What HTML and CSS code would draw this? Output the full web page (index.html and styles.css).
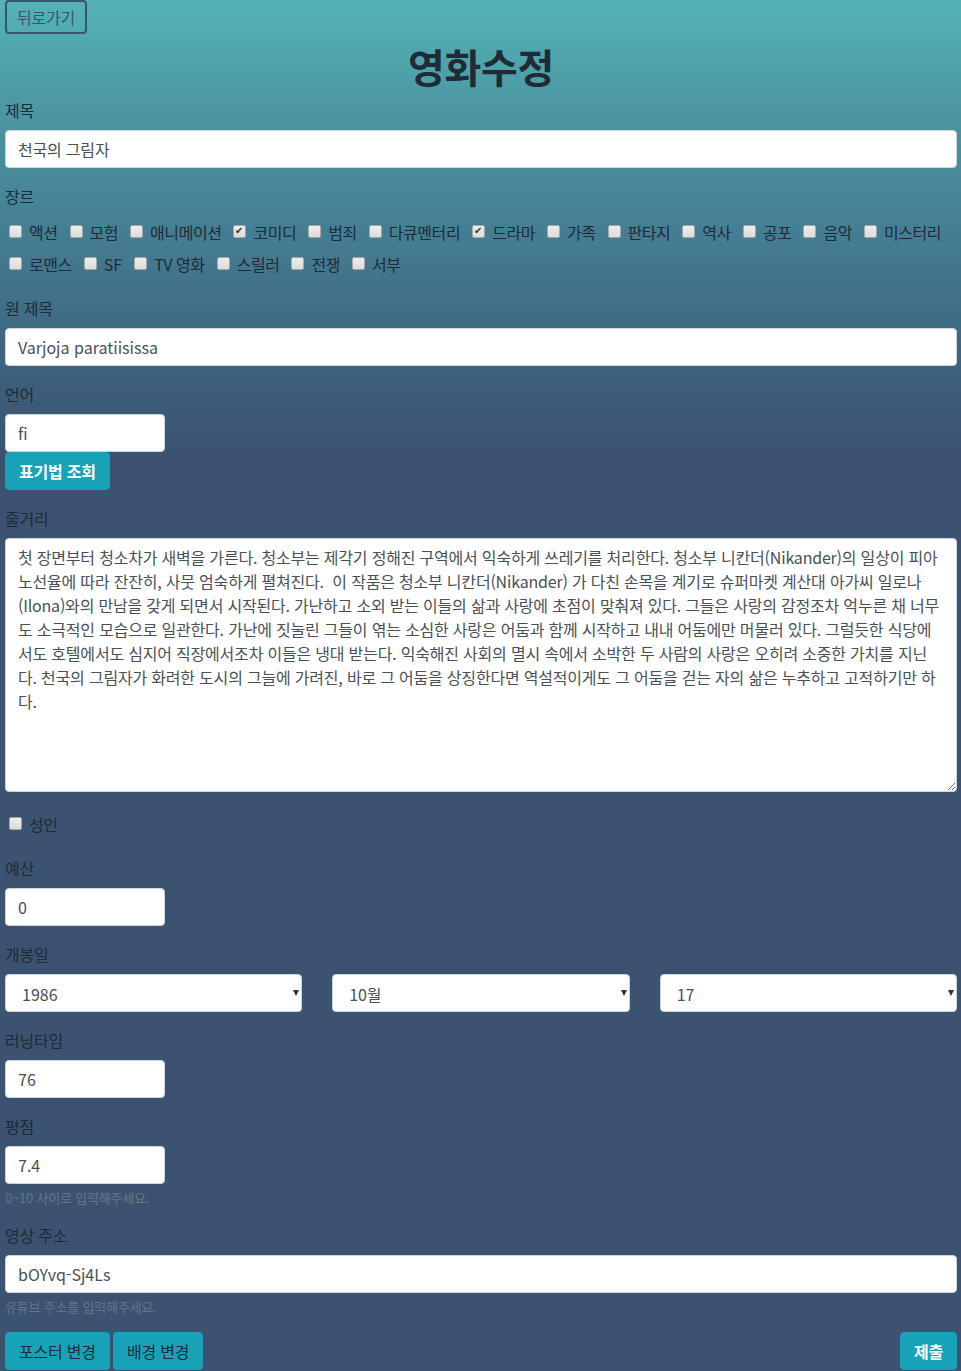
FILE: index.html
```html
<!DOCTYPE html>
<html lang="ko">
<head>
<meta charset="utf-8">
<title>영화수정</title>
<link rel="stylesheet" href="styles.css">
</head>
<body>
<div class="page">
  <button class="back-btn ko">뒤로가기</button>
  <h1 class="title">영화수정</h1>
  <form class="form">
    <div class="group">
      <label class="label ko">제목</label>
      <input class="field ko" type="text" value="천국의 그림자">
    </div>
    <div class="group">
      <label class="label ko">장르</label>
      <div class="genre-row">
        <span class="check"><input type="checkbox"><span class="ko">액션</span></span>
        <span class="check"><input type="checkbox"><span class="ko">모험</span></span>
        <span class="check"><input type="checkbox"><span class="ko">애니메이션</span></span>
        <span class="check"><input type="checkbox" checked><span class="ko">코미디</span></span>
        <span class="check"><input type="checkbox"><span class="ko">범죄</span></span>
        <span class="check"><input type="checkbox"><span class="ko">다큐멘터리</span></span>
        <span class="check"><input type="checkbox" checked><span class="ko">드라마</span></span>
        <span class="check"><input type="checkbox"><span class="ko">가족</span></span>
        <span class="check"><input type="checkbox"><span class="ko">판타지</span></span>
        <span class="check"><input type="checkbox"><span class="ko">역사</span></span>
        <span class="check"><input type="checkbox"><span class="ko">공포</span></span>
        <span class="check"><input type="checkbox"><span class="ko">음악</span></span>
        <span class="check"><input type="checkbox"><span class="ko">미스터리</span></span>
      </div>
      <div class="genre-row">
        <span class="check"><input type="checkbox"><span class="ko">로맨스</span></span>
        <span class="check"><input type="checkbox"><span>SF</span></span>
        <span class="check"><input type="checkbox"><span class="ko">TV 영화</span></span>
        <span class="check"><input type="checkbox"><span class="ko">스릴러</span></span>
        <span class="check"><input type="checkbox"><span class="ko">전쟁</span></span>
        <span class="check"><input type="checkbox"><span class="ko">서부</span></span>
      </div>
    </div>
    <div class="group">
      <label class="label ko">원 제목</label>
      <input class="field" type="text" value="Varjoja paratiisissa">
    </div>
    <div class="group">
      <label class="label ko">언어</label>
      <input class="field small" type="text" value="fi">
      <button type="button" class="btn btn-info ko bold">표기법 조회</button>
    </div>
    <div class="group">
      <label class="label ko">줄거리</label>
      <textarea class="field area ko">첫 장면부터 청소차가 새벽을 가른다. 청소부는 제각기 정해진 구역에서 익숙하게 쓰레기를 처리한다. 청소부 니칸더(Nikander)의 일상이 피아
노선율에 따라 잔잔히, 사뭇 엄숙하게 펼쳐진다.  이 작품은 청소부 니칸더(Nikander) 가 다친 손목을 계기로 슈퍼마켓 계산대 아가씨 일로나
(Ilona)와의 만남을 갖게 되면서 시작된다. 가난하고 소외 받는 이들의 삶과 사랑에 초점이 맞춰져 있다. 그들은 사랑의 감정조차 억누른 채 너무
도 소극적인 모습으로 일관한다. 가난에 짓눌린 그들이 엮는 소심한 사랑은 어둠과 함께 시작하고 내내 어둠에만 머물러 있다. 그럴듯한 식당에
서도 호텔에서도 심지어 직장에서조차 이들은 냉대 받는다. 익숙해진 사회의 멸시 속에서 소박한 두 사람의 사랑은 오히려 소중한 가치를 지닌
다. 천국의 그림자가 화려한 도시의 그늘에 가려진, 바로 그 어둠을 상징한다면 역설적이게도 그 어둠을 걷는 자의 삶은 누추하고 고적하기만 하
다.</textarea>
    </div>
    <div class="group">
      <div class="genre-row">
        <span class="check"><input type="checkbox"><span class="ko">성인</span></span>
      </div>
    </div>
    <div class="group">
      <label class="label ko">예산</label>
      <input class="field small" type="text" value="0">
    </div>
    <div class="group">
      <label class="label ko">개봉일</label>
      <div class="date-grid">
        <div class="select-wrap"><select class="field select"><option>1986</option></select></div>
        <div class="select-wrap"><select class="field select ko"><option>10월</option></select></div>
        <div class="select-wrap"><select class="field select"><option>17</option></select></div>
      </div>
    </div>
    <div class="group">
      <label class="label ko">러닝타임</label>
      <input class="field small" type="text" value="76">
    </div>
    <div class="group">
      <label class="label ko">평점</label>
      <input class="field small" type="text" value="7.4">
      <small class="help ko">0~10 사이로 입력해주세요.</small>
    </div>
    <div class="group">
      <label class="label ko">영상 주소</label>
      <input class="field" type="text" value="bOYvq-Sj4Ls">
      <small class="help ko">유튜브 주소를 입력해주세요.</small>
    </div>
    <div class="actions">
      <div class="actions-left">
        <button type="button" class="btn btn-info dark ko">포스터 변경</button>
        <button type="button" class="btn btn-info dark ko">배경 변경</button>
      </div>
      <button type="submit" class="btn btn-info ko bold">제출</button>
    </div>
  </form>
</div>
</body>
</html>
```

FILE: styles.css
```css
html {
  background: #3b5371;
}
body {
  margin: 0;
  min-height: 1371px;
  background-color: #3b5371;
  background-image: linear-gradient(180deg, #54b3b6 0px, #4c97a2 110px, #447c92 240px, #3d5f7b 380px, #3b5371 450px);
  background-repeat: no-repeat;
  background-size: 100% 460px;
  font-family: "Noto Sans CJK KR", "Noto Sans", sans-serif;
  font-size: 16px;
  line-height: 24px;
  color: #1e2a36;
}
.page {
  padding: 0 4px 0 5px;
}
.ko {
  letter-spacing: -0.2px;
}
.bold {
  font-weight: 700;
}
.back-btn {
  display: block;
  height: 34px;
  margin: 0;
  padding: 0 10px;
  border: 2px solid #3b5271;
  border-radius: 4px;
  background: transparent;
  color: #3b5271;
  font-family: inherit;
  font-size: 16px;
  line-height: 28px;
}
.title {
  margin: 8px 0 8px;
  text-align: center;
  font-size: 40px;
  line-height: 48px;
  font-weight: 700;
  letter-spacing: -0.3px;
  color: #1f2b37;
}
.form {
  margin: 0;
}
.group {
  margin-bottom: 16px;
}
.label {
  display: block;
  margin-bottom: 8px;
  line-height: 24px;
}
.field {
  display: block;
  box-sizing: border-box;
  width: 100%;
  height: 38px;
  margin: 0;
  padding: 6px 12px;
  border: 1px solid #ced4da;
  border-radius: 4px;
  background: #fff;
  color: #495057;
  font-family: inherit;
  font-size: 16px;
  line-height: 24px;
}
.field.small {
  width: 160px;
}
.area {
  height: 254px;
  resize: vertical;
  white-space: pre-wrap;
  overflow: hidden;
}
.genre-row {
  display: flex;
  align-items: center;
  height: 32px;
  white-space: nowrap;
}
.check {
  display: inline-flex;
  flex-shrink: 0;
  align-items: center;
  margin-right: 8px;
  white-space: nowrap;
}
.check .ko {
  letter-spacing: -0.45px;
}
.check input {
  -webkit-appearance: none;
  appearance: none;
  position: relative;
  flex-shrink: 0;
  box-sizing: border-box;
  width: 13px;
  height: 13px;
  margin: 0 7px 2px 4px;
  border: 1px solid #a7a7a7;
  border-radius: 2px;
  background: linear-gradient(180deg, #ededed, #dcdcdc);
}
.check input:checked::after {
  content: "✔";
  position: absolute;
  left: 1px;
  top: -3px;
  font-size: 10px;
  line-height: 16px;
  color: #333;
  letter-spacing: 0;
}
.btn {
  display: inline-block;
  height: 38px;
  margin: 0;
  padding: 0 13px;
  border: 1px solid #17a2b8;
  border-radius: 4px;
  background: #17a2b8;
  color: #fff;
  font-family: inherit;
  font-size: 16px;
  line-height: 36px;
}
.btn.dark {
  color: #1c2b3a;
}
.date-grid {
  display: grid;
  grid-template-columns: repeat(3, 1fr);
  column-gap: 30px;
}
.select-wrap {
  position: relative;
}
.select-wrap::after {
  content: "";
  position: absolute;
  right: 3px;
  top: 16px;
  border-left: 3.5px solid transparent;
  border-right: 3.5px solid transparent;
  border-top: 6px solid #333;
}
.select {
  -webkit-appearance: none;
  appearance: none;
  padding-left: 16px;
  line-height: 26px;
}
.help {
  display: block;
  margin-top: 4px;
  font-size: 13px;
  line-height: 19px;
  color: #66768a;
  letter-spacing: -0.2px;
}
.actions {
  display: flex;
  justify-content: space-between;
  align-items: flex-start;
}
.actions-left {
  display: flex;
  gap: 3px;
}
```
